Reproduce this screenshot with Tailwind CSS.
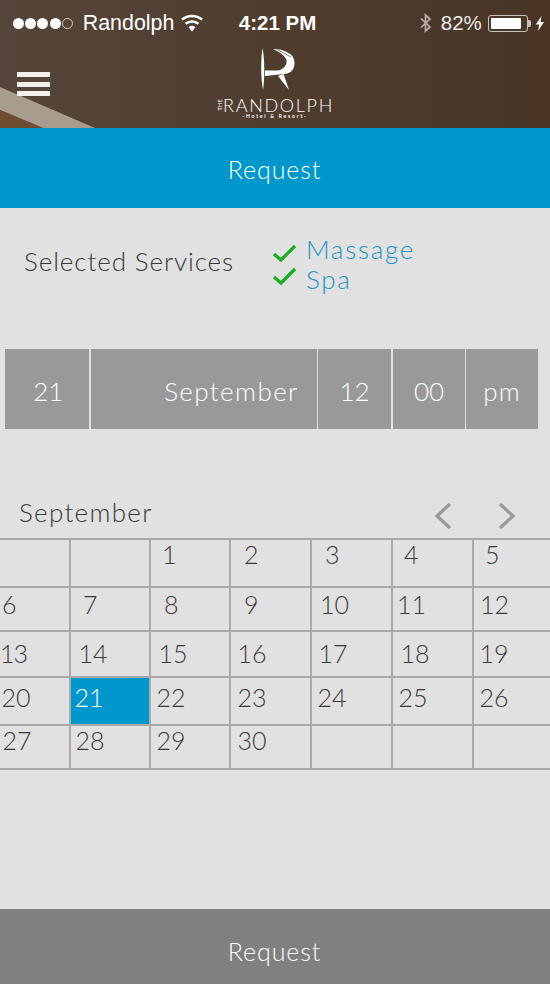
<!DOCTYPE html>
<html><head><meta charset="utf-8"><script src="https://cdn.jsdelivr.net/npm/@tailwindcss/browser@4"></script></head>
<body class="m-0">
<div class="w-[550px] h-[984px] bg-[#e1e1e1] flex flex-col overflow-hidden font-['Lato',sans-serif] font-light">
  <header class="relative h-[128px] shrink-0 bg-linear-to-r from-[#56453a] via-[#4f3d2e] to-[#4a3525] overflow-hidden">
    <div class="absolute inset-0 bg-[#a89c8e] [clip-path:polygon(0_87px,95px_128px,43px_128px,0_110px)]"></div>
    <div class="absolute inset-0 bg-[#6e4d33] [clip-path:polygon(0_110px,43px_128px,0_128px)]"></div>
    <div class="relative flex items-center h-[46px] pl-[13px] text-white font-['Liberation_Sans',sans-serif] font-normal text-[20.5px] whitespace-nowrap">
      <div class="flex items-center gap-[1.2px]">
        <span class="w-[11px] h-[11px] rounded-full bg-white"></span><span class="w-[11px] h-[11px] rounded-full bg-white"></span><span class="w-[11px] h-[11px] rounded-full bg-white"></span><span class="w-[11px] h-[11px] rounded-full bg-white"></span><span class="w-[11px] h-[11px] rounded-full border border-white/70"></span>
      </div>
      <span class="ml-[10px] w-[92px] text-[21.4px]">Randolph</span>
      <svg width="22" height="18" viewBox="0 0 22 18" class="ml-[6px] mt-[-1px]"><path d="M11 17.5 7.5 13.3A5.5 5.5 0 0 1 14.5 13.3Z" fill="#fff"/><path d="M4.6 9.84A10 10 0 0 1 17.4 9.84" stroke="#fff" stroke-width="2.6" fill="none"/><path d="M1 5.6A15.5 15.5 0 0 1 21 5.6" stroke="#fff" stroke-width="2.6" fill="none"/></svg>
      <span class="ml-[36px] w-[78px] font-bold">4:21 PM</span>
      <svg width="13" height="20" viewBox="0 0 13 20" class="ml-[102px] opacity-60"><path d="M2 5.5 11 14 6.5 18V2L11 6 2 14.5" stroke="#fff" stroke-width="1.7" fill="none"/></svg>
      <span class="ml-[9px] w-[41px] opacity-90">82%</span>
      <div class="ml-[6px] w-[40px] h-[17px] rounded-[3px] border border-white/70 p-[2px] flex"><div class="w-[30px] bg-white rounded-[1px]"></div></div>
      <span class="w-[3px] h-[7px] bg-white/70 rounded-r-[2px]"></span>
      <svg width="10" height="15" viewBox="0 0 10 15" class="ml-[4px]"><path d="M6.5 0 .8 8.5h3.4L3 15l6-9H5.5Z" fill="#fff"/></svg>
    </div>
    <div class="absolute left-[17px] top-[72px] w-[33px] h-[24px] flex flex-col justify-between">
      <span class="h-[5px] bg-[#f4efe9]"></span><span class="h-[5px] bg-[#f4efe9]"></span><span class="h-[5px] bg-[#f4efe9]"></span>
    </div>
    <svg width="40" height="48" viewBox="0 0 40 48" class="absolute left-[258px] top-[44px]">
      <path d="M4.500 4C2.700 15 2.700 35 5 46 6.800 35 6.800 15 4.500 4Z" fill="#fff"/>
      <path d="M15 5C26 5 36.500 9 36.500 19 36.500 26 32 30 26 30L7 32V26.500L20 26.500C26 25.500 29.500 20 28.500 16 27 12 22 8 15 5Z" fill="#fff"/>
      <path d="M20 32 31 46 25.500 30Z" fill="#fff"/>
      <path d="M19 5.500 33 13M23 5 35 11" stroke="#50402f" stroke-width=".7" fill="none"/>
    </svg>
    <div class="absolute left-[218px] top-[98px] h-[14px] flex items-center text-white whitespace-nowrap">
      <span class="w-[5px] text-[5.5px] leading-[5px] [writing-mode:vertical-rl] rotate-180 font-normal tracking-[0.3px]">THE</span>
      <span class="text-[18px] leading-[14px] tracking-[1.7px] font-light">RANDOLPH</span>
    </div>
    <div class="absolute left-[218px] top-[113px] w-[114px] text-center text-white font-bold text-[5px] leading-[6px] tracking-[1.8px]">-Hotel &amp; Resort-</div>
  </header>
  <div class="h-[80px] shrink-0 bg-[#0098cc] text-white text-[25px] tracking-[0.9px] flex items-center justify-center pt-[4px] pr-[1px]">Request</div>
  <section class="h-[141px] shrink-0 flex pl-[24px]">
    <div class="pt-[37px] w-[248px] text-[26px] leading-[32px] text-[#383838] tracking-[0.9px] whitespace-nowrap">Selected Services</div>
    <div class="pt-[26px] text-[#1a94c8] text-[26px] leading-[30px] tracking-[1.7px]">
      <div class="flex items-start gap-[9px]"><svg width="25" height="20" viewBox="0 0 25 20" class="mt-[9px]"><path d="M2 11 9 17 23 3" fill="none" stroke="#16b01d" stroke-width="3.2"/></svg>Massage</div>
      <div class="flex items-start gap-[9px]"><svg width="25" height="20" viewBox="0 0 25 20" class="mt-[2px]"><path d="M2 11 9 17 23 3" fill="none" stroke="#16b01d" stroke-width="3.2"/></svg>Spa</div>
    </div>
  </section>
  <section class="flex h-[80px] shrink-0 pl-[4.5px] gap-[1.7px] text-white text-[26px]">
    <div class="w-[84.5px] bg-[#999] flex items-center justify-center pt-[4px] pl-[3px]">21</div>
    <div class="w-[226px] bg-[#999] flex items-center justify-end pr-[18px] pt-[4px] tracking-[1.4px]">September</div>
    <div class="w-[72.5px] bg-[#999] flex items-center justify-center pt-[4px]">12</div>
    <div class="w-[72px] bg-[#999] flex items-center justify-center pt-[4px] pl-[1px]">00</div>
    <div class="w-[71.7px] bg-[#999] flex items-center justify-center pt-[4px] tracking-[1.2px]">pm</div>
  </section>
  <section class="h-[109px] shrink-0 relative text-[26px] text-[#383838] tracking-[1.3px]">
    <span class="absolute left-[19px] top-[67px] leading-[32px]">September</span>
    <svg width="18" height="28" viewBox="0 0 18 28" class="absolute left-[434px] top-[73px]"><path d="M16 2 3 14 16 26" fill="none" stroke="#999" stroke-width="3.2"/></svg>
    <svg width="18" height="28" viewBox="0 0 18 28" class="absolute left-[498px] top-[73px]"><path d="M2 2 15 14 2 26" fill="none" stroke="#999" stroke-width="3.2"/></svg>
  </section>
  <section class="grid grid-cols-[71px_80px_80px_81px_81px_81px_76px] grid-rows-[48px_44px_46px_48px_44px] border-b-2 border-[#aaa] text-[25px] text-[#383838]">
    <div class="border-t-2 border-r-2 border-[#aaa]"></div>
    <div class="border-t-2 border-r-2 border-[#aaa]"></div>
    <div class="border-t-2 border-r-2 border-[#aaa] pl-[11px] leading-[28px]">1</div>
    <div class="border-t-2 border-r-2 border-[#aaa] pl-[13px] leading-[28px]">2</div>
    <div class="border-t-2 border-r-2 border-[#aaa] pl-[13px] leading-[28px]">3</div>
    <div class="border-t-2 border-r-2 border-[#aaa] pl-[11px] leading-[28px]">4</div>
    <div class="border-t-2 border-[#aaa] pl-[11px] leading-[28px]">5</div>
    <div class="border-t-2 border-r-2 border-[#aaa] pl-[2px] leading-[32px]">6</div>
    <div class="border-t-2 border-r-2 border-[#aaa] pl-[12px] leading-[32px]">7</div>
    <div class="border-t-2 border-r-2 border-[#aaa] pl-[13px] leading-[32px]">8</div>
    <div class="border-t-2 border-r-2 border-[#aaa] pl-[13px] leading-[32px]">9</div>
    <div class="border-t-2 border-r-2 border-[#aaa] pl-[8px] leading-[32px]">10</div>
    <div class="border-t-2 border-r-2 border-[#aaa] pl-[4px] leading-[32px]">11</div>
    <div class="border-t-2 border-[#aaa] pl-[6px] leading-[32px]">12</div>
    <div class="border-t-2 border-r-2 border-[#aaa] tracking-[-1px] leading-[42px]">13</div>
    <div class="border-t-2 border-r-2 border-[#aaa] pl-[7.500px] leading-[42px]">14</div>
    <div class="border-t-2 border-r-2 border-[#aaa] pl-[7.500px] leading-[42px]">15</div>
    <div class="border-t-2 border-r-2 border-[#aaa] pl-[6.500px] leading-[42px]">16</div>
    <div class="border-t-2 border-r-2 border-[#aaa] pl-[6.500px] leading-[42px]">17</div>
    <div class="border-t-2 border-r-2 border-[#aaa] pl-[7.500px] leading-[42px]">18</div>
    <div class="border-t-2 border-[#aaa] pl-[5.500px] leading-[42px]">19</div>
    <div class="border-t-2 border-r-2 border-[#aaa] pl-[1.500px] leading-[38px]">20</div>
    <div class="border-t-2 border-r-2 border-[#aaa] bg-[#0098cc] text-white pl-[3.500px] leading-[38px]">21</div>
    <div class="border-t-2 border-r-2 border-[#aaa] pl-[5.500px] leading-[38px]">22</div>
    <div class="border-t-2 border-r-2 border-[#aaa] pl-[6.500px] leading-[38px]">23</div>
    <div class="border-t-2 border-r-2 border-[#aaa] pl-[5.500px] leading-[38px]">24</div>
    <div class="border-t-2 border-r-2 border-[#aaa] pl-[5.500px] leading-[38px]">25</div>
    <div class="border-t-2 border-[#aaa] pl-[5.500px] leading-[38px]">26</div>
    <div class="border-t-2 border-r-2 border-[#aaa] pl-[2.500px] leading-[28px]">27</div>
    <div class="border-t-2 border-r-2 border-[#aaa] pl-[4.500px] leading-[28px]">28</div>
    <div class="border-t-2 border-r-2 border-[#aaa] pl-[5.500px] leading-[28px]">29</div>
    <div class="border-t-2 border-r-2 border-[#aaa] pl-[6.500px] leading-[28px]">30</div>
    <div class="border-t-2 border-r-2 border-[#aaa]"></div>
    <div class="border-t-2 border-r-2 border-[#aaa]"></div>
    <div class="border-t-2 border-[#aaa]"></div>
  </section>
  <div class="mt-auto h-[75px] shrink-0 bg-[#808080] text-white text-[25px] tracking-[0.9px] flex items-center justify-center pt-[10px] pr-[1px]">Request</div>
</div>
</body></html>
